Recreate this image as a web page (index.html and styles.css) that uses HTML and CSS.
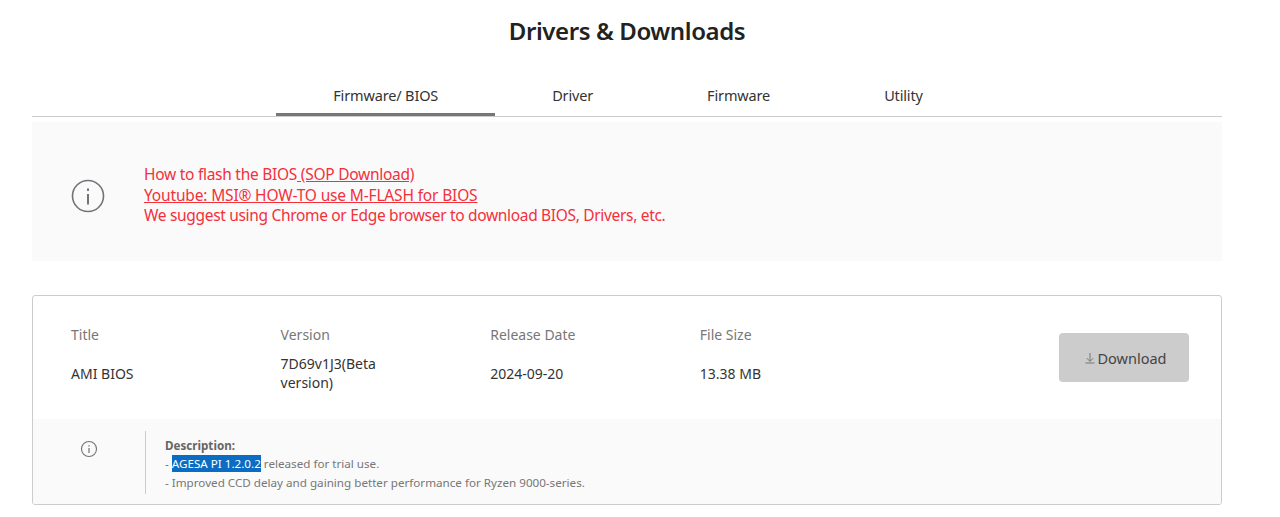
FILE: index.html
```html
<!DOCTYPE html>
<html lang="en">
<head>
  <meta charset="UTF-8">
  <title>Drivers &amp; Downloads</title>
  <link rel="stylesheet" href="styles.css">
</head>
<body>
  <div class="wrap">
    <h2 class="page-title">Drivers &amp; Downloads</h2>

    <div class="tabs">
      <a class="tab active">Firmware/ BIOS</a>
      <a class="tab">Driver</a>
      <a class="tab">Firmware</a>
      <a class="tab">Utility</a>
    </div>

    <!-- notice -->
    <div class="notice">
      <svg class="notice-icon" viewBox="0 0 34 34" width="34" height="34">
        <circle cx="17" cy="17" r="15.5" fill="none" stroke="#6f7478" stroke-width="1.6"/>
        <rect x="16" y="15" width="2" height="10.5" fill="#6f7478"/>
        <rect x="16" y="9.5" width="2" height="2.4" fill="#6f7478"/>
      </svg>
      <div class="notice-text">
        <div class="line-sop">How to flash the BIOS<a class="red-link"> (SOP Download)</a></div>
        <div class="line-yt"><a class="red-link">Youtube: MSI® HOW-TO use M-FLASH for BIOS</a></div>
        <div>We suggest using Chrome or Edge browser to download BIOS, Drivers, etc.</div>
      </div>
    </div>

    <!-- bios card -->
    <div class="card">
      <div class="card-main">
        <div class="col">
          <div class="col-label">Title</div>
          <div class="col-value">AMI BIOS</div>
        </div>
        <div class="col">
          <div class="col-label">Version</div>
          <div class="col-value">7D69v1J3(Beta version)</div>
        </div>
        <div class="col">
          <div class="col-label">Release Date</div>
          <div class="col-value">2024-09-20</div>
        </div>
        <div class="col">
          <div class="col-label">File Size</div>
          <div class="col-value">13.38 MB</div>
        </div>
        <button class="download-btn">
          <svg viewBox="0 0 12 12" width="12" height="12">
            <path d="M6 1v8.2M2.8 6.2 6 9.4l3.2-3.2M1.5 11h9" fill="none" stroke="#777" stroke-width="1"/>
          </svg>
          Download
        </button>
      </div>
      <div class="card-desc">
        <div class="desc-icon">
          <svg viewBox="0 0 18 18" width="18" height="18">
            <circle cx="9" cy="9" r="7.5" fill="none" stroke="#6f7478" stroke-width="1.1"/>
            <rect x="8.4" y="8" width="1.2" height="5" fill="#6f7478"/>
            <rect x="8.4" y="5.2" width="1.2" height="1.4" fill="#6f7478"/>
          </svg>
        </div>
        <div class="desc-text">
          <strong>Description:</strong><br>
          - <span class="selected">AGESA PI 1.2.0.2</span> released for trial use.<br>
          - Improved CCD delay and gaining better performance for Ryzen 9000-series.
        </div>
      </div>
    </div>
  </div>
</body>
</html>
```

FILE: styles.css
```css
body {
  margin: 0;
  background: #fff;
  font-family: "Noto Sans", "Open Sans", sans-serif;
  color: #333;
}

.wrap {
  width: 1190px;
  margin-left: 32px;
}

.page-title {
  margin: 0;
  padding-top: 14px;
  height: 51px;
  line-height: 33px;
  font-size: 24px;
  font-weight: 600;
  letter-spacing: -0.4px;
  text-align: center;
  color: #222;
}

/* tabs */
.tabs {
  display: flex;
  justify-content: center;
  height: 51px;
  padding-left: 2px;
  border-bottom: 1px solid #ccc;
}

.tab {
  padding: 0 57px;
  line-height: 60px;
  height: 48px;
  font-size: 14.5px;
  letter-spacing: -0.15px;
  color: #333;
}

.tab.active {
  border-bottom: 3px solid #777;
}

/* notice */
.notice {
  display: flex;
  align-items: center;
  box-sizing: border-box;
  margin-top: 5px;
  height: 139px;
  padding-top: 6.5px;
  background: #fafafa;
  color: #f4303a;
}

.notice-icon {
  margin-left: 39px;
  margin-top: 2px;
  flex: none;
}

.notice-text {
  margin-left: 39px;
  font-size: 15.5px;
  letter-spacing: -0.32px;
  line-height: 20.5px;
}

.line-sop {
  letter-spacing: -0.27px;
}

.line-yt {
  letter-spacing: -0.16px;
}

.red-link {
  text-decoration: underline;
}

/* card */
.card {
  margin-top: 34px;
  height: 208px;
  border: 1px solid #ccc;
  border-radius: 3px;
  overflow: hidden;
}

.card-main {
  display: flex;
  align-items: flex-start;
  height: 123px;
  padding-left: 38px;
  padding-right: 32px;
  font-size: 14px;
}

.col {
  width: 209.6px;
  padding-top: 28px;
}

.col-label {
  line-height: 22px;
  color: #777;
}

.col-value {
  width: 120px;
  margin-top: 8px;
  line-height: 19px;
  color: #333;
  display: flex;
  min-height: 38px;
  align-items: center;
}

.col:first-child .col-value {
  width: 180px;
}

.download-btn {
  margin-left: auto;
  margin-top: 37px;
  width: 130px;
  height: 49px;
  padding: 0 0 0 2px;
  border: none;
  border-radius: 4px;
  background: #ccc;
  color: #444;
  font-family: inherit;
  font-size: 14.5px;
  display: flex;
  align-items: center;
  justify-content: center;
  gap: 2px;
}

.card-desc {
  display: flex;
  height: 85px;
  padding-top: 12px;
  box-sizing: border-box;
  background: #fafafa;
}

.desc-icon {
  width: 113px;
  height: 63px;
  flex: none;
  padding-left: 47px;
  padding-top: 9px;
  box-sizing: border-box;
  border-right: 1px solid #ccc;
}

.desc-text {
  margin-left: 19px;
  margin-top: 6px;
  font-size: 11.65px;
  line-height: 18.3px;
  color: #777;
}

.desc-text strong {
  font-weight: 700;
  color: #666;
}

.selected {
  background: #0a6cc4;
  color: #fff;
  padding: 1px 0;
}
```
